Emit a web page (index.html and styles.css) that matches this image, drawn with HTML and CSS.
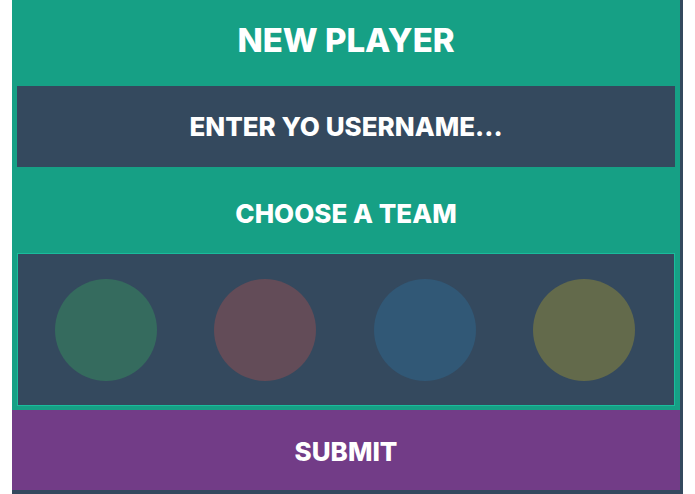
FILE: index.html
```html
<!DOCTYPE html>
<html>
<head>
<meta charset="utf-8">
<link rel="stylesheet" href="styles.css">
</head>
<body>
<div class="panel">
  <h1 class="title">NEW PLAYER</h1>
  <div class="username">ENTER YO USERNAME...</div>
  <div class="label">CHOOSE A TEAM</div>
  <div class="teams">
    <span class="team team-green"></span>
    <span class="team team-red"></span>
    <span class="team team-blue"></span>
    <span class="team team-yellow"></span>
  </div>
  <div class="submit">SUBMIT</div>
</div>
</body>
</html>
```
FILE: styles.css
```css
html, body {
  margin: 0;
  padding: 0;
  background: #ffffff;
}
body {
  font-family: "Inter", "Open Sans", sans-serif;
}
.panel {
  margin-left: 12px;
  width: 668px;
  height: 490px;
  background: #16a085;
  border-right: 3px solid #34495e;
  border-bottom: 4px solid #34495e;
  display: flex;
  flex-direction: column;
  color: #ffffff;
  font-weight: 800;
}
.title {
  margin: 0;
  height: 86px;
  display: flex;
  align-items: center;
  justify-content: center;
  font-size: 33px;
  font-weight: 800;
  letter-spacing: 0;
  padding-bottom: 7px;
  box-sizing: border-box;
}
.username {
  margin: 0 5px;
  height: 81px;
  background: #34495e;
  display: flex;
  align-items: center;
  justify-content: center;
  font-size: 26px;
}
.label {
  height: 86px;
  display: flex;
  align-items: center;
  justify-content: center;
  font-size: 26px;
  padding-top: 7px;
  box-sizing: border-box;
}
.teams {
  margin: 0 5px;
  height: 153px;
  box-sizing: border-box;
  background: #34495e;
  border: 1px solid #1abc9c;
  display: flex;
  align-items: center;
  justify-content: space-between;
  padding: 0 39px 0 37px;
}
.team {
  width: 102px;
  height: 102px;
  border-radius: 50%;
}
.team-green { background: #356b5e; }
.team-red { background: #634c58; }
.team-blue { background: #315876; }
.team-yellow { background: #636a4b; }
.submit {
  margin-top: 4px;
  height: 80px;
  background: #723c87;
  display: flex;
  align-items: center;
  justify-content: center;
  font-size: 26px;
  padding-top: 2px;
  box-sizing: border-box;
}
```
